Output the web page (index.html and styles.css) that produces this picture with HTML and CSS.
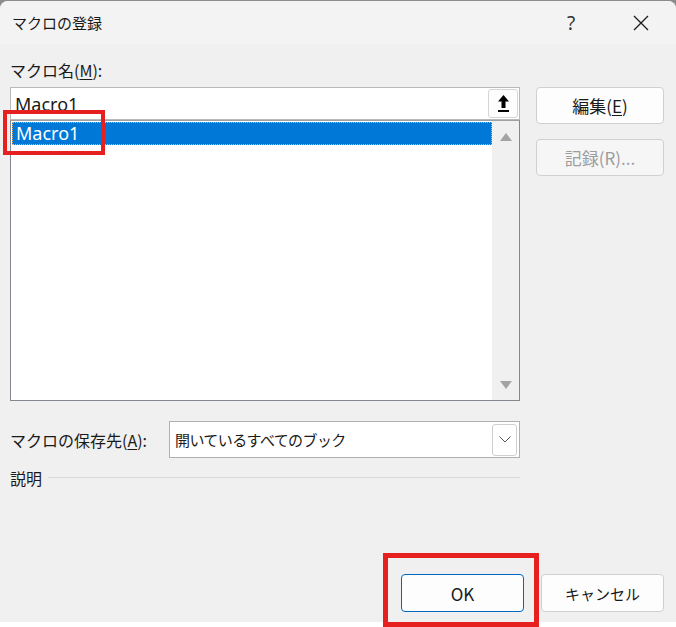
FILE: index.html
```html
<!doctype html>
<html lang="ja">
<head>
    <meta charset="UTF-8">
    <title>マクロの登録</title>
    <link rel="stylesheet" href="styles.css">
</head>
<body>

    <div class="window">

        <div class="titlebar">
            <span class="title">マクロの登録</span>
            <span class="tb-button">?</span>
            <span class="tb-button close">
                <svg width="16" height="16" viewBox="0 0 16 16"><path d="M1 1 L15 15 M15 1 L1 15" stroke="#1a1a1a" stroke-width="1.3" fill="none"/></svg>
            </span>
        </div>

        <div class="content">
            <div class="field-label">マクロ名(<u>M</u>):</div>

            <div class="main">
                <div class="left">
                    <div class="name-box">
                        <span class="name-value">Macro1</span>
                        <span class="collapse-button">
                            <svg width="11" height="18" viewBox="0 0 11 18"><path d="M5.5 0 L11 6.5 L7.5 6.5 L7.5 13 L3.5 13 L3.5 6.5 L0 6.5 Z" fill="#000"/><rect x="0" y="15" width="11" height="2" fill="#000"/></svg>
                        </span>
                    </div>
                    <div class="macro-list">
                        <div class="items">
                            <div class="item selected">Macro1</div>
                        </div>
                        <div class="scrollbar">
                            <svg width="12" height="8" viewBox="0 0 12 8"><path d="M6 0 L12 8 L0 8 Z" fill="#a3a3a3"/></svg>
                            <svg width="12" height="8" viewBox="0 0 12 8"><path d="M0 0 L12 0 L6 8 Z" fill="#a3a3a3"/></svg>
                        </div>
                    </div>
                </div>

                <div class="right">
                    <button class="btn">編集(<u>E</u>)</button>
                    <button class="btn" disabled>記録(R)...</button>
                </div>
            </div>

            <div class="store-row">
                <span class="field-label inline">マクロの保存先(<u>A</u>):</span>
                <div class="combo">
                    <span class="combo-value">開いているすべてのブック</span>
                    <span class="combo-button">
                        <svg width="12" height="7" viewBox="0 0 12 7"><path d="M0.5 0.5 L6 6 L11.5 0.5" stroke="#555" stroke-width="1" fill="none"/></svg>
                    </span>
                </div>
            </div>

            <div class="description">
                <span>説明</span>
                <span class="rule"></span>
            </div>

            <div class="footer">
                <button class="btn default">OK</button>
                <button class="btn">キャンセル</button>
            </div>
        </div>

        <div class="mark mark-list"></div>
        <div class="mark mark-ok"></div>
    </div>

</body>
</html>
```

FILE: styles.css
```css
html, body {
    margin: 0;
    padding: 0;
}
body {
    width: 676px;
    height: 627px;
    overflow: hidden;
    background: linear-gradient(#8c8c8c 0 20px, #ffffff 20px);
    font-family: "Noto Sans", "Noto Sans CJK JP", sans-serif;
    color: #1a1a1a;
}
u {
    text-decoration-thickness: 1px;
    text-underline-offset: 2px;
}
.window {
    position: relative;
    margin-top: 1px;
    height: 621px;
    background: #f0f0f0;
    border-radius: 8px 8px 0 0;
    display: flex;
    flex-direction: column;
}
.titlebar {
    height: 43px;
    background: #f3f3f3;
    border-radius: 8px 8px 0 0;
    display: flex;
    align-items: center;
}
.title {
    flex: 1;
    padding-left: 12px;
    font-family: "Noto Sans CJK JP", sans-serif;
    font-size: 15px;
}
.tb-button {
    width: 70px;
    height: 43px;
    display: flex;
    align-items: center;
    justify-content: center;
    font-size: 19px;
    color: #333;
}
.content {
    flex: 1;
    padding: 0 12px 10px 10px;
    display: flex;
    flex-direction: column;
}
.field-label {
    font-family: "Noto Sans CJK JP", sans-serif;
    font-size: 16px;
    height: 24px;
    line-height: 24px;
    margin: 14px 0 5px 0;
}
.field-label.inline {
    margin: 0;
    width: 159px;
}
.main {
    display: grid;
    grid-template-columns: 510px 128px;
    column-gap: 16px;
}
.name-box {
    height: 31px;
    border: 1px solid #b9b9b9;
    background: #fff;
    display: flex;
    align-items: center;
    justify-content: space-between;
}
.name-value {
    padding-left: 4px;
    font-size: 18px;
}
.collapse-button {
    width: 30px;
    height: 29px;
    margin-right: 1px;
    border: 1px solid #d6d6d6;
    border-radius: 3px;
    background: #fdfdfd;
    display: flex;
    align-items: center;
    justify-content: center;
    box-sizing: border-box;
}
.macro-list {
    height: 279px;
    border: 1px solid #828790;
    border-top: 1px solid #a0a0a0;
    background: #fff;
    display: flex;
}
.items {
    flex: 1;
    padding: 1px 0 0 1px;
}
.item {
    height: 21px;
    line-height: 21px;
    padding-left: 3px;
    font-size: 18px;
}
.item.selected {
    background: #0078d7;
    color: #fff;
    border: 1px dotted #f3b35e;
}
.scrollbar {
    width: 27px;
    background: #f0f0f0;
    display: flex;
    flex-direction: column;
    justify-content: space-between;
    align-items: center;
    padding: 12px 0 11px 0;
}
.right {
    display: flex;
    flex-direction: column;
    gap: 15px;
}
.btn {
    height: 37px;
    border: 1px solid #d0d0d0;
    border-radius: 4px;
    background: #fdfdfd;
    font-family: "Noto Sans CJK JP", sans-serif;
    font-size: 17px;
    color: #1a1a1a;
    padding: 0;
}
.btn:disabled {
    color: #9d9d9d;
    background: #f6f6f6;
}
.store-row {
    margin-top: 20px;
    display: flex;
    align-items: center;
}
.combo {
    width: 351px;
    height: 37px;
    box-sizing: border-box;
    border: 1px solid #b0b0b0;
    background: #fff;
    display: flex;
    align-items: center;
    justify-content: space-between;
}
.combo-value {
    padding-left: 5px;
    font-family: "Noto Sans CJK JP", sans-serif;
    font-size: 15px;
    letter-spacing: -0.6px;
}
.combo-button {
    width: 25px;
    height: 32px;
    margin-right: 2px;
    box-sizing: border-box;
    border: 1px solid #cfcfcf;
    border-radius: 3px;
    display: flex;
    align-items: center;
    justify-content: center;
}
.description {
    margin-top: 8px;
    display: flex;
    align-items: center;
    gap: 6px;
    font-family: "Noto Sans CJK JP", sans-serif;
    font-size: 16px;
    width: 510px;
}
.rule {
    flex: 1;
    height: 1px;
    background: #d9d9d9;
    margin-top: -2px;
}
.footer {
    margin-top: auto;
    display: flex;
    justify-content: flex-end;
    gap: 17px;
}
.footer .btn {
    width: 123px;
    height: 38px;
    font-size: 15px;
}
.footer .btn.default {
    border-color: #0067c0;
    font-size: 17px;
}
.mark {
    position: absolute;
    border: 4px solid #e5201f;
    box-sizing: border-box;
}
.mark-list {
    left: 3px;
    top: 109px;
    width: 102px;
    height: 45px;
}
.mark-ok {
    left: 383px;
    top: 552px;
    width: 156px;
    height: 74px;
    border-width: 5px;
}
```
